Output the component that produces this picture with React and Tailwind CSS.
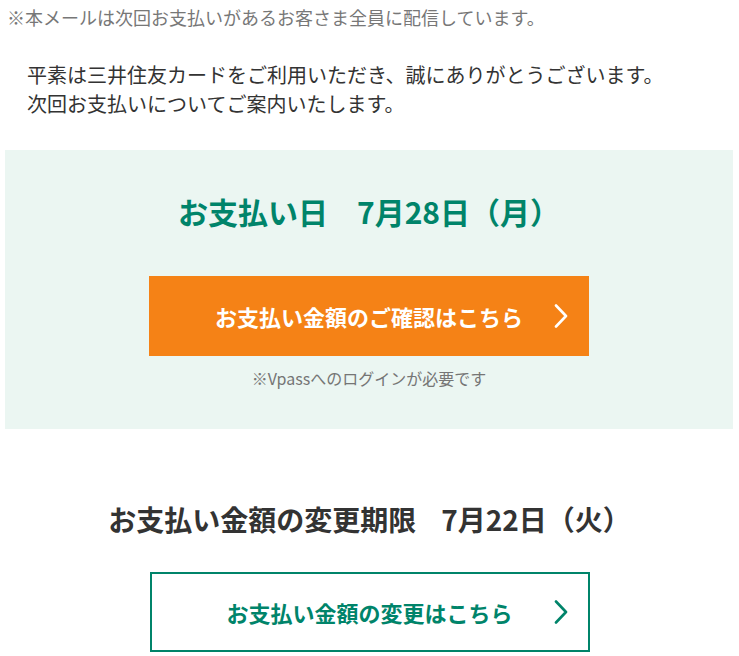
import React from "react";

const font = { fontFamily: '"Noto Sans CJK JP", "Noto Sans", sans-serif' };

function Chevron({ className }) {
  return (
    <svg className={className} width="14" height="24" viewBox="0 0 14 24" fill="none">
      <path d="M2 1.5 L12 12 L2 22.5" stroke="currentColor" strokeWidth="2.6" strokeLinecap="round" strokeLinejoin="round" />
    </svg>
  );
}

export default function App() {
  return (
    <div className="w-[739px] bg-white text-[#333]" style={font}>
      <p className="pl-[7px] pt-[4px] text-[18px] leading-[26px] text-[#777]">
        ※本メールは次回お支払いがあるお客さま全員に配信しています。
      </p>
      <div className="pl-[27px] pt-[30px] text-[20px] leading-[29px] text-[#333]">
        <p>平素は三井住友カードをご利用いただき、誠にありがとうございます。</p>
        <p>次回お支払いについてご案内いたします。</p>
      </div>
      <div className="mx-[5px] mt-[32px] flex h-[279px] w-[728px] flex-col items-center bg-[#ebf6f2]">
        <h2 className="mt-[41px] flex text-[30px] font-bold leading-[40px] text-[#00846a]">
          <span>お支払い日</span>
          <span className="ml-[29px]">7月28日（月）</span>
        </h2>
        <a className="relative mt-[45px] flex h-[80px] w-[440px] items-center justify-center bg-[#f58216] text-[22px] font-bold text-white">
          <span>お支払い金額のご確認はこちら</span>
          <Chevron className="absolute right-[21px] top-[28px] text-white" />
        </a>
        <p className="mt-[11px] text-[16px] leading-[22px] text-[#757575]">※Vpassへのログインが必要です</p>
      </div>
      <div className="flex flex-col items-center">
        <h2 className="mt-[70px] flex text-[28px] font-bold leading-[40px] text-[#333]">
          <span>お支払い金額の変更期限</span>
          <span className="ml-[25px]">7月22日（火）</span>
        </h2>
        <a className="relative mt-[33px] flex h-[80px] w-[440px] items-center justify-center border-2 border-[#00846a] bg-white text-[22px] font-bold text-[#00846a]">
          <span>お支払い金額の変更はこちら</span>
          <Chevron className="absolute right-[20px] top-[26px] text-[#00846a]" />
        </a>
      </div>
    </div>
  );
}
